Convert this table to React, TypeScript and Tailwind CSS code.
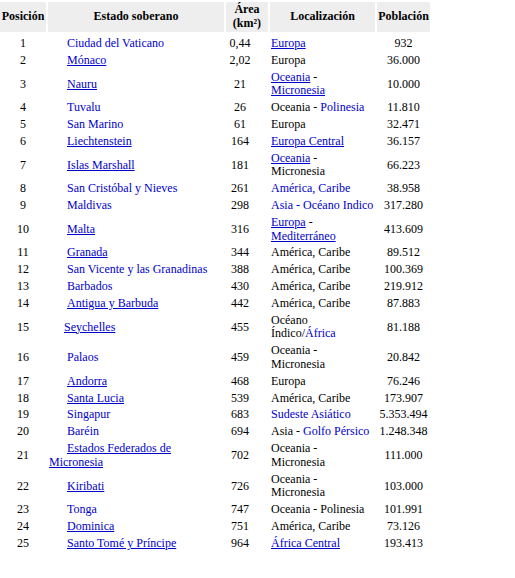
import type { ReactNode } from "react";

// plain blue text (no underline) vs. underlined link
function B({ children }: { children: ReactNode }) {
  return <span className="text-[#0000cc]">{children}</span>;
}

function L({ children }: { children: ReactNode }) {
  return <a href="#" className="text-[#0000cc] underline">{children}</a>;
}

type Row = {
  pos: number;
  name: ReactNode;
  indent?: string;
  area: string;
  loc: ReactNode;
  pop: string;
};

const ROWS: Row[] = [
  { pos: 1, name: <B>Ciudad del Vaticano</B>, area: "0,44", loc: <L>Europa</L>, pop: "932" },
  { pos: 2, name: <L>Mónaco</L>, area: "2,02", loc: "Europa", pop: "36.000" },
  { pos: 3, name: <L>Nauru</L>, area: "21", loc: <><L>Oceania</L> -<br /><L>Micronesia</L></>, pop: "10.000" },
  { pos: 4, name: <B>Tuvalu</B>, area: "26", loc: <>Oceania - <B>Polinesia</B></>, pop: "11.810" },
  { pos: 5, name: <B>San Marino</B>, area: "61", loc: "Europa", pop: "32.471" },
  { pos: 6, name: <L>Liechtenstein</L>, area: "164", loc: <L>Europa Central</L>, pop: "36.157" },
  { pos: 7, name: <L>Islas Marshall</L>, area: "181", loc: <><L>Oceania</L> -<br />Micronesia</>, pop: "66.223" },
  { pos: 8, name: <B>San Cristóbal y Nieves</B>, area: "261", loc: <B>América, Caribe</B>, pop: "38.958" },
  { pos: 9, name: <B>Maldivas</B>, area: "298", loc: <B>Asia - Océano Indico</B>, pop: "317.280" },
  { pos: 10, name: <L>Malta</L>, area: "316", loc: <><L>Europa</L> -<br /><L>Mediterráneo</L></>, pop: "413.609" },
  { pos: 11, name: <L>Granada</L>, area: "344", loc: "América, Caribe", pop: "89.512" },
  { pos: 12, name: <B>San Vicente y las Granadinas</B>, area: "388", loc: "América, Caribe", pop: "100.369" },
  { pos: 13, name: <B>Barbados</B>, area: "430", loc: "América, Caribe", pop: "219.912" },
  { pos: 14, name: <L>Antigua y Barbuda</L>, area: "442", loc: "América, Caribe", pop: "87.883" },
  { pos: 15, name: <L>Seychelles</L>, indent: "indent-[15px]", area: "455", loc: <>Océano<br />Índico/<B>África</B></>, pop: "81.188" },
  { pos: 16, name: <B>Palaos</B>, area: "459", loc: <>Oceania -<br />Micronesia</>, pop: "20.842" },
  { pos: 17, name: <L>Andorra</L>, area: "468", loc: "Europa", pop: "76.246" },
  { pos: 18, name: <L>Santa Lucia</L>, area: "539", loc: "América, Caribe", pop: "173.907" },
  { pos: 19, name: <B>Singapur</B>, area: "683", loc: <B>Sudeste Asiático</B>, pop: "5.353.494" },
  { pos: 20, name: <B>Baréin</B>, area: "694", loc: <>Asia - <B>Golfo Pérsico</B></>, pop: "1.248.348" },
  { pos: 21, name: <L>Estados Federados de<br />Micronesia</L>, area: "702", loc: <>Oceania -<br />Micronesia</>, pop: "111.000" },
  { pos: 22, name: <L>Kiribati</L>, area: "726", loc: <>Oceania -<br />Micronesia</>, pop: "103.000" },
  { pos: 23, name: <B>Tonga</B>, area: "747", loc: "Oceania - Polinesia", pop: "101.991" },
  { pos: 24, name: <L>Dominica</L>, area: "751", loc: "América, Caribe", pop: "73.126" },
  { pos: 25, name: <L>Santo Tomé y Príncipe</L>, area: "964", loc: <L>África Central</L>, pop: "193.413" },
];

export default function App() {
  return (
    <div className="min-h-[578px] bg-white text-black font-[family-name:'Liberation_Serif',serif] text-[12px] leading-[13.8px]">
      <table className="table-fixed border-separate border-spacing-x-[2px] border-spacing-y-[1px] w-[434px] -ml-[2px] mt-px">
        <thead>
          <tr className="bg-[#eeeeee] font-bold text-center">
            <th className="w-[46px] p-px">Posición</th>
            <th className="w-[176px] p-px">Estado soberano</th>
            <th className="w-[42px] p-px">Área<br />(km²)</th>
            <th className="w-[105px] p-px">Localización</th>
            <th className="w-[53px] p-px">Población</th>
          </tr>
        </thead>
        <tbody>
          {ROWS.map((r, i) => {
            const pad = i === 0 ? "px-px pb-px pt-[4.5px]" : "p-px";
            return (
              <tr key={r.pos}>
                <td className={`${pad} text-center`}>{r.pos}</td>
                <td className={`${pad} ${r.indent ?? "indent-[18px]"} whitespace-nowrap`}>{r.name}</td>
                <td className={`${pad} pr-[15px] text-center`}>{r.area}</td>
                <td className={`${pad} whitespace-nowrap`}>{r.loc}</td>
                <td className={`${pad} text-center`}>{r.pop}</td>
              </tr>
            );
          })}
        </tbody>
      </table>
    </div>
  );
}
